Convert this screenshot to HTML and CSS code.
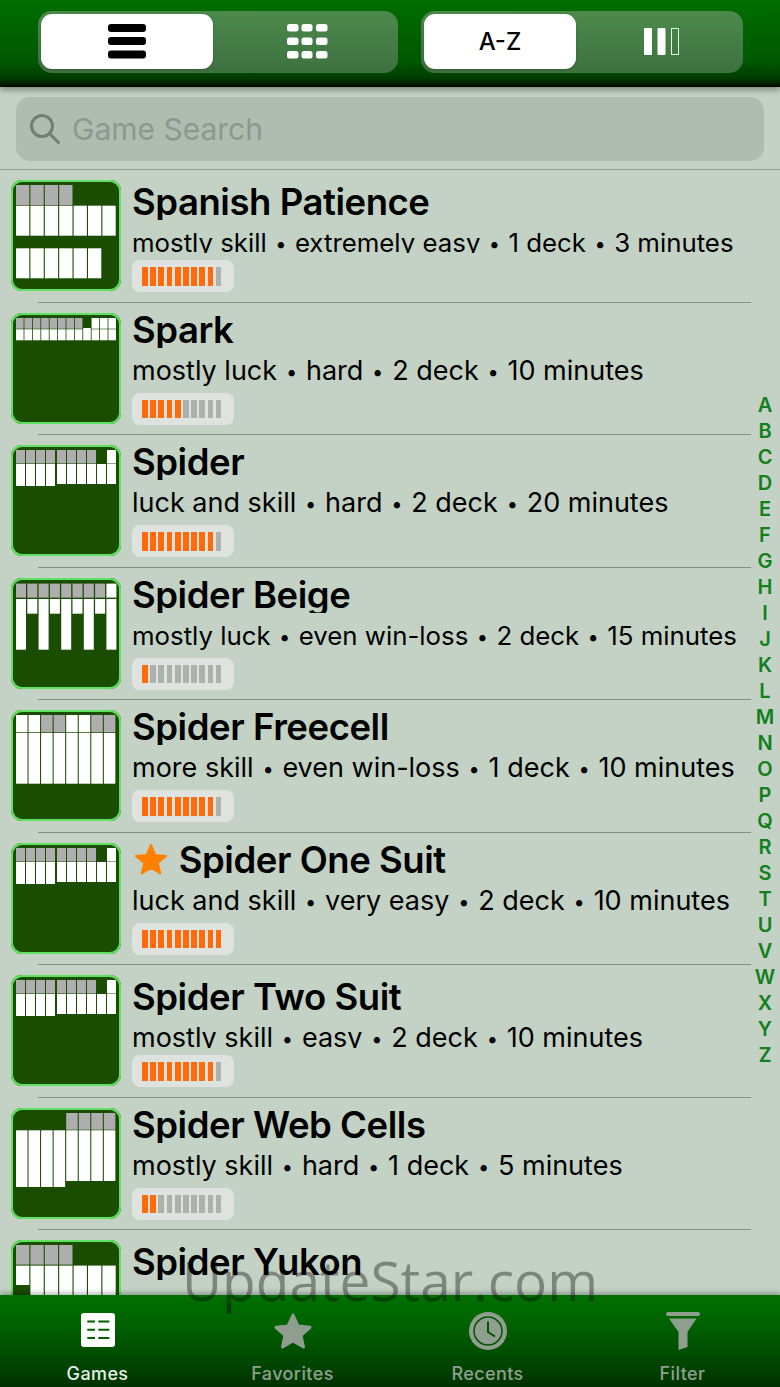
FILE: index.html
```html
<!DOCTYPE html>
<html lang="en">

<head>
    <title>Game List</title>
    <link rel="stylesheet" href="styles.css">
</head>

<body>
    <svg class="defs">
        <symbol id="spiderDeal" viewBox="0 0 110 111">
            <g class="card-gray">
                <rect x="5" y="5" width="9" height="13.5"/><rect x="15" y="5" width="9" height="13.5"/>
                <rect x="25" y="5" width="9" height="13.5"/><rect x="35" y="5" width="9" height="13.5"/>
                <rect x="46" y="5" width="9" height="13.5"/><rect x="56" y="5" width="9" height="13.5"/>
                <rect x="66" y="5" width="9" height="13.5"/><rect x="76" y="5" width="9" height="13.5"/>
            </g>
            <g class="card-white">
                <rect x="5" y="19" width="9" height="22"/><rect x="15" y="19" width="9" height="22"/>
                <rect x="25" y="19" width="9" height="22"/><rect x="35" y="19" width="9" height="22"/>
                <rect x="46" y="19" width="9" height="20"/><rect x="56" y="19" width="9" height="20"/>
                <rect x="66" y="19" width="9" height="20"/><rect x="76" y="19" width="9" height="20"/>
                <rect x="86" y="19" width="9" height="20"/><rect x="96" y="19" width="9" height="20"/>
                <rect x="96" y="5" width="9" height="13.5"/>
            </g>
        </symbol>
    </svg>

    <div class="app">
        <header class="topbar">
            <div class="seg seg-view">
                <div class="seg-item seg-on">
                    <svg width="38" height="35" viewBox="0 0 38 35"><rect x="0" y="0" width="38" height="8" rx="3"/><rect x="0" y="13" width="38" height="8" rx="3"/><rect x="0" y="26.5" width="38" height="8" rx="3"/></svg>
                </div>
                <div class="seg-item">
                    <svg class="ico-white" width="41" height="35" viewBox="0 0 41 35">
                        <rect x="0" y="0" width="11.5" height="7.5" rx="2.5"/><rect x="14.5" y="0" width="11" height="7.5" rx="2.5"/><rect x="29" y="0" width="11.5" height="7.5" rx="2.5"/>
                        <rect x="0" y="13.5" width="11.5" height="7.5" rx="2.5"/><rect x="14.5" y="13.5" width="11" height="7.5" rx="2.5"/><rect x="29" y="13.5" width="11.5" height="7.5" rx="2.5"/>
                        <rect x="0" y="27" width="11.5" height="7.5" rx="2.5"/><rect x="14.5" y="27" width="11" height="7.5" rx="2.5"/><rect x="29" y="27" width="11.5" height="7.5" rx="2.5"/>
                    </svg>
                </div>
            </div>
            <div class="seg seg-sort">
                <div class="seg-item seg-on"><span class="seg-text">A-Z</span></div>
                <div class="seg-item">
                    <svg width="36" height="27" viewBox="0 0 36 27"><rect class="bar-fill" x="0" y="0" width="8" height="27" rx="1"/><rect class="bar-fill" x="13.5" y="0" width="8" height="27" rx="1"/><rect class="bar-line" x="27.5" y="0.5" width="7" height="26"/></svg>
                </div>
            </div>
        </header>

        <div class="search-wrap">
            <div class="search">
                <svg width="32" height="32" viewBox="0 0 32 32"><circle cx="13" cy="13" r="10.5"/><path d="M21 21 L29.5 29.5"/></svg>
                <span>Game Search</span>
            </div>
        </div>

        <main class="list">
            <div class="row row-low">
                <svg class="thumb" viewBox="0 0 110 111">
                    <g class="card-gray"><rect x="5" y="5" width="13.3" height="20"/><rect x="19.4" y="5" width="13.3" height="20"/><rect x="33.8" y="5" width="13.3" height="20"/><rect x="48.2" y="5" width="13.3" height="20"/></g>
                    <g class="card-white">
                        <rect x="5" y="25.7" width="13.3" height="30"/><rect x="19.4" y="25.7" width="13.3" height="30"/><rect x="33.8" y="25.7" width="13.3" height="30"/><rect x="48.2" y="25.7" width="13.3" height="30"/><rect x="62.6" y="25.7" width="13.3" height="30"/><rect x="77" y="25.7" width="13.3" height="30"/><rect x="91.4" y="25.7" width="13.3" height="30"/>
                        <rect x="5" y="68.3" width="13.3" height="30"/><rect x="19.4" y="68.3" width="13.3" height="30"/><rect x="33.8" y="68.3" width="13.3" height="30"/><rect x="48.2" y="68.3" width="13.3" height="30"/><rect x="62.6" y="68.3" width="13.3" height="30"/><rect x="77" y="68.3" width="13.3" height="30"/>
                    </g>
                </svg>
                <div class="info">
                    <div class="title">Spanish Patience</div>
                    <div class="sub sub-fit">mostly skill <i>•</i> extremely easy <i>•</i> 1 deck <i>•</i> 3 minutes</div>
                    <div class="meter"><b></b><b></b><b></b><b></b><b></b><b></b><b></b><b></b><b></b><u></u></div>
                </div>
            </div>

            <div class="row">
                <svg class="thumb" viewBox="0 0 110 111">
                    <g class="card-gray"><rect x="5" y="5" width="7.6" height="10.7"/><rect x="13.4" y="5" width="7.6" height="10.7"/><rect x="21.8" y="5" width="7.6" height="10.7"/><rect x="30.2" y="5" width="7.6" height="10.7"/><rect x="38.6" y="5" width="7.6" height="10.7"/><rect x="47" y="5" width="7.6" height="10.7"/><rect x="55.4" y="5" width="7.6" height="10.7"/><rect x="63.8" y="5" width="7.6" height="10.7"/></g>
                    <g class="card-white">
                        <rect x="80.6" y="5" width="7.6" height="10.7"/><rect x="89" y="5" width="7.6" height="10.7"/><rect x="97.4" y="5" width="7.6" height="10.7"/>
                        <rect x="5" y="16.3" width="7.6" height="11"/><rect x="13.4" y="16.3" width="7.6" height="11"/><rect x="21.8" y="16.3" width="7.6" height="11"/><rect x="30.2" y="16.3" width="7.6" height="11"/><rect x="38.6" y="16.3" width="7.6" height="11"/><rect x="47" y="16.3" width="7.6" height="11"/><rect x="55.4" y="16.3" width="7.6" height="11"/><rect x="63.8" y="16.3" width="7.6" height="11"/><rect x="72.2" y="15" width="7.6" height="12.3"/><rect x="80.6" y="16.3" width="7.6" height="11"/><rect x="89" y="16.3" width="7.6" height="11"/><rect x="97.4" y="16.3" width="7.6" height="11"/>
                    </g>
                </svg>
                <div class="info">
                    <div class="title">Spark</div>
                    <div class="sub">mostly luck <i>•</i> hard <i>•</i> 2 deck <i>•</i> 10 minutes</div>
                    <div class="meter"><b></b><b></b><b></b><b></b><b></b><u></u><u></u><u></u><u></u><u></u></div>
                </div>
            </div>

            <div class="row">
                <svg class="thumb" viewBox="0 0 110 111"><use href="#spiderDeal"/></svg>
                <div class="info">
                    <div class="title">Spider</div>
                    <div class="sub">luck and skill <i>•</i> hard <i>•</i> 2 deck <i>•</i> 20 minutes</div>
                    <div class="meter"><b></b><b></b><b></b><b></b><b></b><b></b><b></b><b></b><b></b><u></u></div>
                </div>
            </div>

            <div class="row">
                <svg class="thumb" viewBox="0 0 110 111">
                    <g class="card-gray"><rect x="5" y="5.6" width="10" height="14"/><rect x="16.3" y="5.6" width="10" height="14"/><rect x="27.6" y="5.6" width="10" height="14"/><rect x="38.9" y="5.6" width="10" height="14"/><rect x="50.2" y="5.6" width="10" height="14"/><rect x="61.5" y="5.6" width="10" height="14"/><rect x="72.8" y="5.6" width="10" height="14"/><rect x="84.1" y="5.6" width="10" height="14"/></g>
                    <g class="card-white">
                        <rect x="95.4" y="5.6" width="10" height="14"/>
                        <rect x="5" y="21" width="10" height="50.7"/><rect x="16.3" y="21" width="10" height="14.7"/><rect x="27.6" y="21" width="10" height="50.7"/><rect x="38.9" y="21" width="10" height="14.7"/><rect x="50.2" y="21" width="10" height="50.7"/><rect x="61.5" y="21" width="10" height="14.7"/><rect x="72.8" y="21" width="10" height="50.7"/><rect x="84.1" y="21" width="10" height="14.7"/><rect x="95.4" y="21" width="10" height="50.7"/>
                    </g>
                </svg>
                <div class="info">
                    <div class="title">Spider Beige</div>
                    <div class="sub sub-fit">mostly luck <i>•</i> even win-loss <i>•</i> 2 deck <i>•</i> 15 minutes</div>
                    <div class="meter"><b></b><u></u><u></u><u></u><u></u><u></u><u></u><u></u><u></u><u></u></div>
                </div>
            </div>

            <div class="row">
                <svg class="thumb" viewBox="0 0 110 111">
                    <g class="card-gray"><rect x="30.1" y="5" width="11.5" height="17.3"/><rect x="42.65" y="5" width="11.5" height="17.3"/><rect x="80.3" y="5" width="11.5" height="17.3"/><rect x="92.85" y="5" width="11.5" height="17.3"/></g>
                    <g class="card-white">
                        <rect x="5" y="5" width="11.5" height="17.3"/><rect x="17.55" y="5" width="11.5" height="17.3"/><rect x="55.2" y="5" width="11.5" height="17.3"/><rect x="67.75" y="5" width="11.5" height="17.3"/>
                        <rect x="5" y="23" width="11.5" height="50.7"/><rect x="17.55" y="23" width="11.5" height="50.7"/><rect x="30.1" y="23" width="11.5" height="50.7"/><rect x="42.65" y="23" width="11.5" height="50.7"/><rect x="55.2" y="23" width="11.5" height="50.7"/><rect x="67.75" y="23" width="11.5" height="50.7"/><rect x="80.3" y="23" width="11.5" height="50.7"/><rect x="92.85" y="23" width="11.5" height="50.7"/>
                    </g>
                </svg>
                <div class="info">
                    <div class="title">Spider Freecell</div>
                    <div class="sub">more skill <i>•</i> even win-loss <i>•</i> 1 deck <i>•</i> 10 minutes</div>
                    <div class="meter"><b></b><b></b><b></b><b></b><b></b><b></b><b></b><b></b><b></b><u></u></div>
                </div>
            </div>

            <div class="row">
                <svg class="thumb" viewBox="0 0 110 111"><use href="#spiderDeal"/></svg>
                <div class="info">
                    <div class="title">
                        <svg class="fav" width="34" height="33" viewBox="0 0 34 33"><path d="M17 2 L21.2 12 L32 13 L23.8 20.1 L26.3 30.5 L17 25 L7.7 30.5 L10.2 20.1 L2 13 L12.8 12 Z"/></svg>
                        Spider One Suit
                    </div>
                    <div class="sub">luck and skill <i>•</i> very easy <i>•</i> 2 deck <i>•</i> 10 minutes</div>
                    <div class="meter"><b></b><b></b><b></b><b></b><b></b><b></b><b></b><b></b><b></b><b></b></div>
                </div>
            </div>

            <div class="row row-low">
                <svg class="thumb" viewBox="0 0 110 111"><use href="#spiderDeal"/></svg>
                <div class="info">
                    <div class="title">Spider Two Suit</div>
                    <div class="sub">mostly skill <i>•</i> easy <i>•</i> 2 deck <i>•</i> 10 minutes</div>
                    <div class="meter"><b></b><b></b><b></b><b></b><b></b><b></b><b></b><b></b><b></b><u></u></div>
                </div>
            </div>

            <div class="row">
                <svg class="thumb" viewBox="0 0 110 111">
                    <g class="card-gray"><rect x="55.2" y="5" width="11.5" height="16.7"/><rect x="67.75" y="5" width="11.5" height="16.7"/><rect x="80.3" y="5" width="11.5" height="16.7"/><rect x="92.85" y="5" width="11.5" height="16.7"/></g>
                    <g class="card-white">
                        <rect x="5" y="22.3" width="11.5" height="56.7"/><rect x="17.55" y="22.3" width="11.5" height="56.7"/><rect x="30.1" y="22.3" width="11.5" height="56.7"/><rect x="42.65" y="22.3" width="11.5" height="56.7"/>
                        <rect x="55.2" y="22.3" width="11.5" height="50.7"/><rect x="67.75" y="22.3" width="11.5" height="50.7"/><rect x="80.3" y="22.3" width="11.5" height="50.7"/><rect x="92.85" y="22.3" width="11.5" height="50.7"/>
                    </g>
                </svg>
                <div class="info">
                    <div class="title">Spider Web Cells</div>
                    <div class="sub">mostly skill <i>•</i> hard <i>•</i> 1 deck <i>•</i> 5 minutes</div>
                    <div class="meter"><b></b><b></b><u></u><u></u><u></u><u></u><u></u><u></u><u></u><u></u></div>
                </div>
            </div>

            <div class="row row-low">
                <svg class="thumb" viewBox="0 0 110 111">
                    <g class="card-gray"><rect x="5" y="5" width="13.3" height="19.6"/><rect x="19.4" y="5" width="13.3" height="19.6"/><rect x="33.8" y="5" width="13.3" height="19.6"/><rect x="48.2" y="5" width="13.3" height="19.6"/></g>
                    <g class="card-white">
                        <rect x="5" y="25.6" width="13.3" height="19.4"/><rect x="19.4" y="25.6" width="13.3" height="60"/><rect x="33.8" y="25.6" width="13.3" height="60"/><rect x="48.2" y="25.6" width="13.3" height="60"/><rect x="62.6" y="25.6" width="13.3" height="60"/><rect x="77" y="25.6" width="13.3" height="60"/><rect x="91.4" y="25.6" width="13.3" height="60"/>
                    </g>
                </svg>
                <div class="info">
                    <div class="title">Spider Yukon</div>
                </div>
            </div>
        </main>

        <nav class="tabbar">
            <div class="tab tab-on">
                <svg class="games-ico" width="34" height="34" viewBox="0 0 34 34">
                    <rect class="tab-fill" x="0" y="0" width="34" height="34" rx="3"/>
                    <path class="list-cut" d="M6.3 8.4 H14 M17.3 8.4 H28.3 M6.3 16.7 H14 M17.3 16.7 H28.3 M6.3 25 H14 M17.3 25 H28.3"/>
                </svg>
                <span>Games</span>
            </div>
            <div class="tab">
                <svg width="40" height="38" viewBox="0 0 40 38"><path class="tab-fill tab-star" d="M20 3 L25 14 L37 15.3 L28 23.4 L30.5 35 L20 29 L9.5 35 L12 23.4 L3 15.3 L15 14 Z"/></svg>
                <span>Favorites</span>
            </div>
            <div class="tab">
                <svg width="38" height="38" viewBox="0 0 38 38">
                    <circle class="tab-fill" cx="19" cy="19" r="19"/>
                    <circle class="clock-ring" cx="19" cy="19" r="14"/>
                    <path class="clock-hand" d="M19 9.5 V20 L26 24.5"/>
                </svg>
                <span>Recents</span>
            </div>
            <div class="tab">
                <svg width="34" height="38" viewBox="0 0 34 38">
                    <rect class="tab-fill" x="0" y="0" width="34" height="4" rx="2"/>
                    <path class="tab-fill" d="M3 6.5 H30.5 L21.5 20 V35 L12.5 38 V20 Z"/>
                </svg>
                <span>Filter</span>
            </div>
        </nav>
    </div>

    <div class="index">
        <span>A</span><span>B</span><span>C</span><span>D</span><span>E</span><span>F</span><span>G</span><span>H</span><span>I</span><span>J</span><span>K</span><span>L</span><span>M</span><span>N</span><span>O</span><span>P</span><span>Q</span><span>R</span><span>S</span><span>T</span><span>U</span><span>V</span><span>W</span><span>X</span><span>Y</span><span>Z</span>
    </div>

    <div class="watermark">UpdateStar.com</div>
</body>

</html>
```

FILE: styles.css
```css
* {
    box-sizing: border-box;
}

body {
    margin: 0;
    height: 1387px;
    overflow: hidden;
    position: relative;
    font-family: Inter, "Liberation Sans", sans-serif;
    background-color: rgb(195, 210, 196);
    color: rgb(0, 0, 0);
}

.defs {
    display: none;
}

.app {
    height: 1387px;
    display: flex;
    flex-direction: column;
}

/* top bar */
.topbar {
    height: 87px;
    flex: none;
    display: flex;
    gap: 23px;
    padding: 11px 0 0 38px;
    background: linear-gradient(rgb(0, 110, 0) 0%, rgb(0, 88, 0) 70%, rgb(0, 60, 0) 90%, rgb(0, 25, 0) 97%, rgb(0, 10, 0) 100%);
    box-shadow: 0 3px 6px rgba(0, 0, 0, 0.35);
    position: relative;
    z-index: 2;
}

.seg {
    height: 62px;
    padding: 3px;
    display: flex;
    border-radius: 14px;
    background: linear-gradient(rgb(76, 138, 76), rgb(62, 112, 64));
}

.seg-view {
    width: 360px;
}

.seg-sort {
    width: 322px;
}

.seg-item {
    height: 55px;
    flex: 1;
    display: flex;
    align-items: center;
    justify-content: center;
}

.seg-view .seg-item:last-child {
    padding-left: 6px;
}

.seg-sort .seg-item:last-child {
    padding-left: 8px;
}

.seg-on {
    flex: none;
    width: 172px;
    background-color: rgb(255, 255, 255);
    border-radius: 11px;
    box-shadow: 0 1px 3px rgba(0, 0, 0, 0.2);
}

.seg-sort .seg-on {
    width: 152px;
}

.seg-text {
    font-size: 24px;
    font-weight: 500;
}

.ico-white rect,
.bar-fill {
    fill: rgb(255, 255, 255);
}

.bar-line {
    fill: none;
    stroke: rgb(225, 245, 225);
    stroke-width: 1;
}

/* search */
.search-wrap {
    height: 83px;
    flex: none;
    padding: 10px 16px 8px 16px;
    border-bottom: 1px solid rgb(143, 160, 145);
}

.search {
    height: 64px;
    display: flex;
    align-items: center;
    gap: 11px;
    padding: 0 0 0 13px;
    border-radius: 14px;
    background-color: rgb(175, 189, 177);
    font-size: 30px;
    color: rgb(138, 153, 142);
}

.search svg {
    fill: none;
    stroke: rgb(111, 127, 115);
    stroke-width: 3;
    stroke-linecap: round;
}

/* list */
.list {
    flex: 1;
    min-height: 0;
    overflow: hidden;
}

.row {
    height: 132.5px;
    padding: 10px 0 0 11px;
    display: flex;
    gap: 11px;
    position: relative;
}

.row::after {
    content: "";
    position: absolute;
    left: 38px;
    right: 29px;
    bottom: 0;
    height: 1px;
    background-color: rgb(128, 143, 130);
}

.thumb {
    width: 110px;
    height: 111px;
    flex: none;
    background-color: rgb(26, 77, 0);
    outline: 2px solid rgb(96, 226, 96);
    outline-offset: -2px;
    border-radius: 11px;
}

.card-gray {
    fill: rgb(174, 174, 174);
}

.card-white {
    fill: rgb(255, 255, 255);
}

.info {
    flex: 1;
    min-width: 0;
    height: 111px;
    display: flex;
    flex-direction: column;
    position: relative;
}

.title {
    height: 36px;
    line-height: 36px;
    margin-top: -1px;
    font-size: 36.5px;
    font-weight: 600;
    letter-spacing: -0.45px;
    white-space: nowrap;
    overflow: hidden;
}

.fav {
    fill: rgb(255, 128, 0);
    stroke: rgb(255, 128, 0);
    stroke-width: 2;
    stroke-linejoin: round;
    vertical-align: -3px;
    margin: 0 2px 0 2px;
}

.sub {
    height: 36px;
    line-height: 36px;
    margin-top: 5px;
    font-size: 27px;
    white-space: nowrap;
    overflow: hidden;
}

.sub-fit {
    font-size: 25.8px;
}

.sub i {
    font-style: normal;
    font-size: 20px;
    vertical-align: 1px;
    margin: 0 1.2px;
}

.row-low .title {
    margin-top: 4px;
}

.row-low .sub {
    height: 28px;
}

.meter {
    position: absolute;
    left: 0;
    top: 80px;
    width: 102px;
    height: 32px;
    padding: 7px 10px;
    display: flex;
    gap: 2.4px;
    border-radius: 8px;
    background-color: rgb(223, 227, 224);
}

.meter b,
.meter u {
    width: 5.8px;
    height: 18.5px;
}

.meter b {
    background-color: rgb(255, 106, 10);
}

.meter u {
    background-color: rgb(174, 176, 174);
}

/* tab bar */
.tabbar {
    height: 92px;
    flex: none;
    display: flex;
    position: relative;
    z-index: 2;
    background: linear-gradient(rgb(0, 112, 0) 0%, rgb(0, 96, 0) 35%, rgb(0, 62, 0) 85%, rgb(0, 48, 0) 100%);
    box-shadow: 0 -2px 5px rgba(0, 0, 0, 0.3);
}

.tab {
    flex: 1;
    height: 92px;
    padding-top: 17px;
    display: flex;
    flex-direction: column;
    align-items: center;
    font-size: 18px;
    font-weight: 500;
    letter-spacing: 0.4px;
    color: rgb(143, 160, 143);
}

.tab svg {
    flex: none;
}

.games-ico {
    margin-top: 1px;
}

.tab span {
    position: absolute;
    top: 68px;
}

.tab-fill {
    fill: rgb(143, 158, 143);
}

.tab-star {
    stroke: rgb(143, 158, 143);
    stroke-width: 3;
    stroke-linejoin: round;
}

.tab-on {
    color: rgb(229, 240, 229);
}

.tab-on .tab-fill {
    fill: rgb(255, 255, 255);
}

.list-cut {
    fill: none;
    stroke: rgb(0, 96, 0);
    stroke-width: 2;
}

.clock-ring {
    fill: none;
    stroke: rgb(0, 84, 0);
    stroke-width: 1.5;
}

.clock-hand {
    fill: none;
    stroke: rgb(0, 84, 0);
    stroke-width: 2;
}

/* side index */
.index {
    position: absolute;
    right: 2px;
    top: 392px;
    width: 26px;
    display: flex;
    flex-direction: column;
    align-items: center;
    font-size: 20px;
    font-weight: 600;
    line-height: 26px;
    color: rgb(18, 128, 28);
}

.watermark {
    position: absolute;
    left: 182px;
    top: 1245px;
    font-family: "Open Sans", sans-serif;
    font-size: 55px;
    line-height: 70px;
    color: rgba(0, 0, 0, 0.36);
    white-space: nowrap;
    z-index: 3;
}
```
